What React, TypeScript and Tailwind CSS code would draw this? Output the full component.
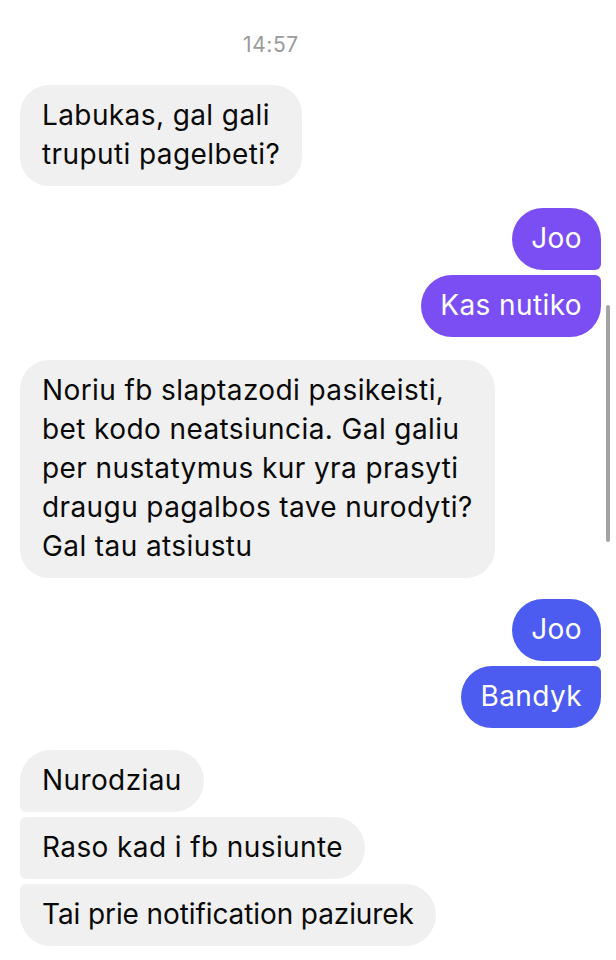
import React from "react";

type Msg = {
  lines: string[];
  shape: string;
  extra?: string;
};

const inBubble = "bg-[#f0f0f0] text-[#0a0a0a]";

function Incoming({ lines, shape, extra = "" }: Msg) {
  return (
    <div className="flex pl-[20px]">
      <div
        className={`${inBubble} ${shape} ${extra} px-[22px] pt-[11px] pb-[12px]`}
      >
        {lines.map((l) => (
          <div key={l} className="whitespace-nowrap">
            {l}
          </div>
        ))}
      </div>
    </div>
  );
}

function Outgoing({
  text,
  shape,
  color,
}: {
  text: string;
  shape: string;
  color: string;
}) {
  return (
    <div className="flex justify-end pr-[15px]">
      <div
        className={`${color} ${shape} px-[19px] pt-[11px] pb-[12px] text-white whitespace-nowrap`}
      >
        {text}
      </div>
    </div>
  );
}

export default function App() {
  return (
    <div className="relative w-[616px] h-[960px] overflow-hidden bg-white font-['Inter','Liberation_Sans',sans-serif] text-[28px] leading-[39px] tracking-[0.4px]">
      <div className="pl-[243px] pt-[33px] text-[21px] leading-[24px] tracking-[0.6px] text-[#9b9b9b]">
        14:57
      </div>

      <div className="mt-[28px] flex flex-col">
        <Incoming
          lines={["Labukas, gal gali", "truputi pagelbeti?"]}
          shape="rounded-[29px]"
        />

        <div className="mt-[22px] flex flex-col gap-[5px]">
          <Outgoing
            text="Joo"
            color="bg-[#7a4ef2]"
            shape="rounded-[31px] rounded-br-[6px]"
          />
          <Outgoing
            text="Kas nutiko"
            color="bg-[#7a4ef2]"
            shape="rounded-[31px] rounded-tr-[6px]"
          />
        </div>

        <div className="mt-[23px]">
          <Incoming
            lines={[
              "Noriu fb slaptazodi pasikeisti,",
              "bet kodo neatsiuncia. Gal galiu",
              "per nustatymus kur yra prasyti",
              "draugu pagalbos tave nurodyti?",
              "Gal tau atsiustu",
            ]}
            shape="rounded-[29px]"
          />
        </div>

        <div className="mt-[21px] flex flex-col gap-[5px]">
          <Outgoing
            text="Joo"
            color="bg-[#4c5bf0]"
            shape="rounded-[31px] rounded-br-[6px]"
          />
          <Outgoing
            text="Bandyk"
            color="bg-[#4c5bf0]"
            shape="rounded-[31px] rounded-tr-[6px]"
          />
        </div>

        <div className="mt-[22px] flex flex-col gap-[5px]">
          <Incoming
            lines={["Nurodziau"]}
            shape="rounded-[31px] rounded-bl-[6px]"
          />
          <Incoming
            lines={["Raso kad i fb nusiunte"]}
            shape="rounded-r-[31px] rounded-l-[6px]"
          />
          <Incoming
            lines={["Tai prie notification paziurek"]}
            shape="rounded-[31px] rounded-tl-[6px]"
            extra="tracking-[-0.1px]"
          />
        </div>
      </div>

      {/* scroll indicator */}
      <div className="absolute left-[606px] top-[305px] h-[237px] w-[4px] rounded-full bg-[#a4a4a4]" />
    </div>
  );
}
